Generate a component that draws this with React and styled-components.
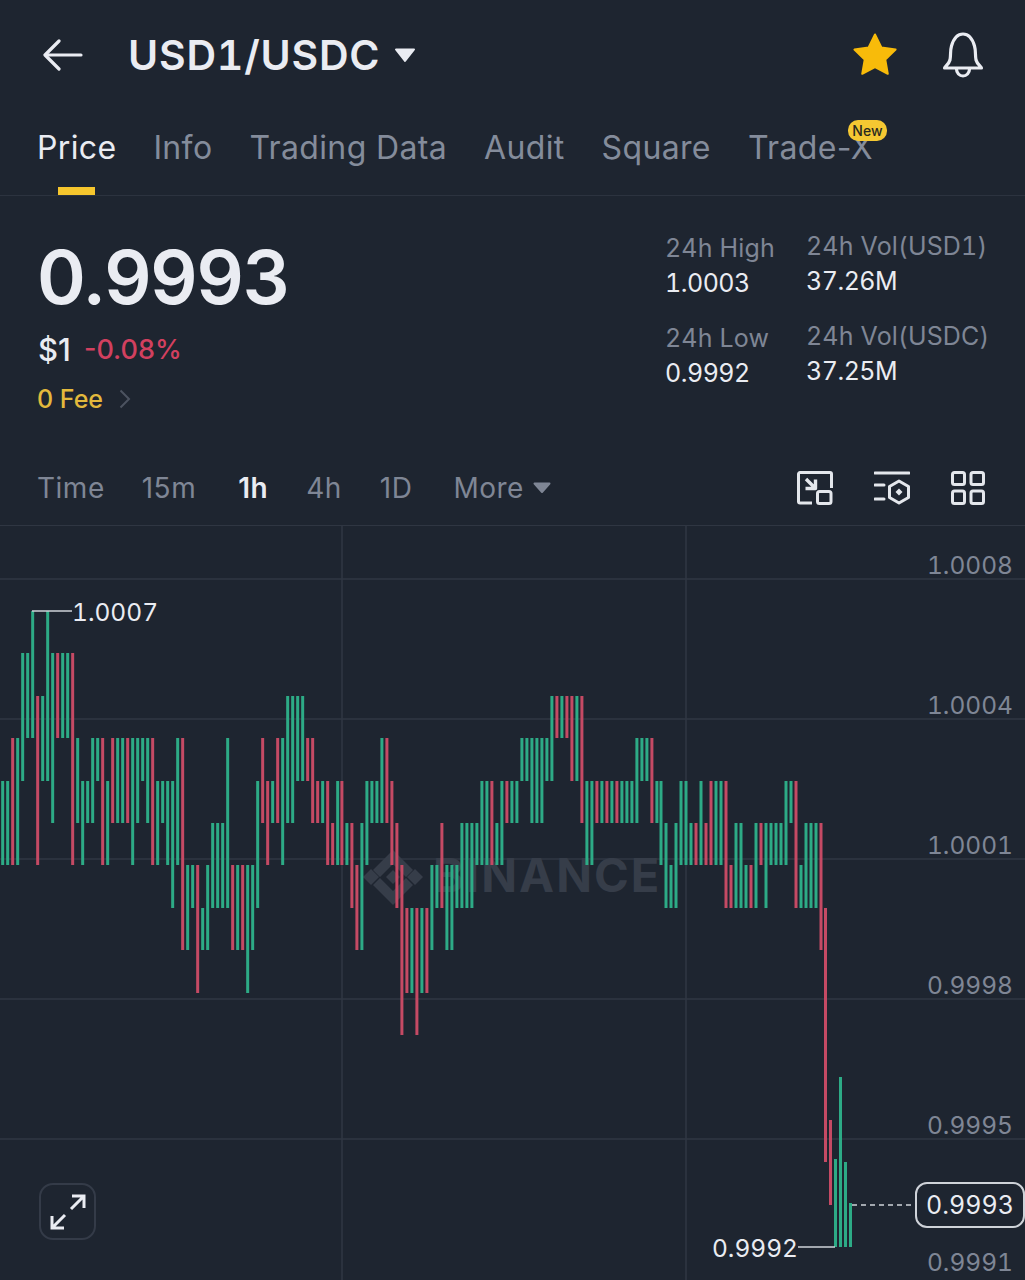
import React from 'react';
import styled, { createGlobalStyle } from 'styled-components';

const GlobalStyle = createGlobalStyle`
  html, body { margin: 0; padding: 0; background: #1e2530; }
  body { font-family: Inter, "Open Sans", sans-serif; overflow: hidden; }
`;

const Page = styled.div`
  width: 1025px;
  height: 1280px;
  background: #1e2530;
  color: #eaecf2;
  display: flex;
  flex-direction: column;
  overflow: hidden;
`;

const Header = styled.header`
  height: 110px;
  display: flex;
  align-items: center;
  padding: 0 41px 0 43px;
  box-sizing: border-box;
`;

const Title = styled.h1`
  margin: 0 0 0 45px;
  font-size: 41px;
  font-weight: 600;
  font-variant-numeric: tabular-nums;
  letter-spacing: 0.8px;
  line-height: 1;
`;

const Caret = styled.svg`
  margin-left: 14px;
`;

const HeaderIcons = styled.div`
  margin-left: auto;
  display: flex;
  align-items: center;
  gap: 44px;
`;

const Tabs = styled.nav`
  height: 86px;
  display: flex;
  gap: 37px;
  padding: 20px 0 0 37px;
  box-sizing: border-box;
  border-bottom: 1px solid #2c333f;
`;

const Tab = styled.div`
  position: relative;
  height: 65px;
  font-size: 32px;
  letter-spacing: 0.35px;
  line-height: 36px;
  color: ${p => (p.$active ? '#eaecf2' : '#848c9b')};
  white-space: nowrap;
  ${p => p.$active && `
    &::after {
      content: '';
      position: absolute;
      left: 21px;
      bottom: 0;
      width: 37px;
      height: 8px;
      background: #f6c62d;
    }
  `}
`;

const NewBadge = styled.span`
  position: absolute;
  right: -14px;
  top: -10px;
  width: 39px;
  height: 21px;
  border-radius: 10px;
  background: #f5c832;
  color: #2a2a20;
  font-size: 14px;
  font-weight: 500;
  letter-spacing: 0;
  line-height: 21px;
  text-align: center;
`;

const Stats = styled.section`
  height: 243px;
  display: flex;
  justify-content: space-between;
  padding: 33px 39px 0 37px;
  box-sizing: border-box;
`;

const PriceColumn = styled.div`
  display: flex;
  flex-direction: column;
`;

const BigPrice = styled.div`
  font-size: 74px;
  font-weight: 600;
  line-height: 96px;
  letter-spacing: -1.2px;
`;

const SubRow = styled.div`
  margin-top: 4px;
  padding-left: 1px;
  display: flex;
  align-items: center;
  gap: 13px;
  height: 40px;
`;

const Usd = styled.span`
  font-size: 31px;
  font-weight: 500;
`;

const Change = styled.span`
  font-size: 27px;
  font-weight: 500;
  color: #d2405f;
`;

const Fee = styled.div`
  margin-top: 15px;
  display: flex;
  align-items: center;
  gap: 16px;
  font-size: 25px;
  font-weight: 500;
  color: #e3b93c;
`;

const MiniStats = styled.div`
  width: 321px;
  display: grid;
  grid-template-columns: 141px 180px;
  grid-auto-rows: 90px;
  padding-top: 2px;
`;

const MiniStat = styled.div`
  font-size: 25px;
  font-variant-numeric: tabular-nums;
  line-height: 35px;
  white-space: nowrap;
  margin-top: ${p => (p.$lift ? '-2px' : '0')};
`;

const MiniLabel = styled.div`
  color: #7f8695;
  letter-spacing: 0.15px;
`;

const MiniValue = styled.div`
  color: #eaecf2;
  letter-spacing: -0.5px;
`;

const Toolbar = styled.div`
  height: 87px;
  display: flex;
  align-items: center;
  padding: 11px 40px 0 37px;
  box-sizing: border-box;
  border-bottom: 1px solid #2f3642;
  font-size: 28px;
  letter-spacing: 0.5px;
  color: #7f8695;
`;

const Interval = styled.span`
  margin-right: ${p => p.$gap}px;
  color: ${p => (p.$active ? '#eaecf2' : 'inherit')};
  font-weight: ${p => (p.$active ? 600 : 400)};
`;

const MoreCaret = styled.svg`
  margin-left: 9px;
`;

const ToolIcons = styled.div`
  margin-left: auto;
  display: flex;
  align-items: center;
  gap: 41px;
`;

const ChartArea = styled.div`
  position: relative;
  flex: 1;
`;

const ChartSvg = styled.svg`
  display: block;
  width: 1025px;
  height: 754px;
`;

const AxisText = styled.text`
  font-family: Inter, sans-serif;
  font-size: 24.5px;
  font-variant-numeric: tabular-nums;
  fill: ${p => p.$fill || '#7f8695'};
  text-anchor: ${p => p.$anchor || 'end'};
`;

const Watermark = styled.text`
  font-family: Inter, sans-serif;
  font-size: 47px;
  font-weight: 700;
  letter-spacing: 2px;
  fill: #363d49;
`;

const PriceTag = styled.div`
  position: absolute;
  right: 0;
  top: 656px;
  width: 110px;
  height: 46px;
  box-sizing: border-box;
  border: 2px solid #cfd3d9;
  border-radius: 12px;
  background: #1e2530;
  font-size: 25px;
  font-variant-numeric: tabular-nums;
  line-height: 42px;
  text-align: center;
`;

const ExpandButton = styled.div`
  position: absolute;
  left: 39px;
  top: 657px;
  width: 57px;
  height: 57px;
  box-sizing: border-box;
  border: 2px solid #343b48;
  border-radius: 14px;
  display: flex;
  align-items: center;
  justify-content: center;
`;

// y of each price step on the chart
const LEVELS = [611, 653, 696, 738, 781, 823, 865, 908, 950, 993, 1035];

const GREEN = '#2dab86';
const RED = '#c54a64';

// colour + top step + bottom step (a = step 10)
const SEG_1 = 'g46 g46 r36 g36 g14 g13 g03 r26 g24 g04 g15 r13 g13 g13 r16 g35 g46 g45 g35 g34 r36 g46 r35 g35 g35 r35 g36 g35 g34 g35 r36 g46 g45 g46 g47 g36 r38 g68 g67 r69 g78 g68 g57 g57 g57 g37 r68 g68 r68 g69 g68 g47 r35 r46 g45 r35 g36 g25 g25 g24 g24 r34 r35 r45 g45 r46 r56 g46';
const SEG_2 = 'r46 g56 r57 r68 g58 g46 g45 g45 g35 r35 r46 r57 r6a r79 g79 r7a g79 r79 g68 g67 r57 g68 g68 g67 g57 g57 g57 g56 g46 g46 r46 g56 g46 r45 g45 g45 g34 g34 g35 g35 g35 g34 g24 r23 g23 r23 r24 g24 r25 g46 g46 r45 g45 r45 g45 r45 g45 g45 g45 g35 g34 g34 r35 g45';
const SEG_3 = 'g46 g57 g67 g57 g46 g46 g56 r56 g46 r56 r46 g46 g46 r47 r67 g57 g57 g67 r67 g57 r56 g57 g56 g56 g56 g46 g45 r47 g67 g57 g57 g57 r58';

const parseSeg = (str, x0) =>
  str.split(' ').map((s, i) => ({
    x: x0 + i * 5,
    color: s[0] === 'g' ? GREEN : RED,
    y1: LEVELS[parseInt(s[1], 36)],
    y2: LEVELS[parseInt(s[2], 36)],
  }));

const BARS = [
  ...parseSeg(SEG_1, 2.67),
  ...parseSeg(SEG_2, 341.9),
  ...parseSeg(SEG_3, 661),
  { x: 825.5, color: RED, y1: 908, y2: 1162 },
  { x: 830.5, color: RED, y1: 1120, y2: 1205 },
  { x: 835.5, color: GREEN, y1: 1159, y2: 1247 },
  { x: 840.5, color: GREEN, y1: 1077, y2: 1247 },
  { x: 845.5, color: GREEN, y1: 1162, y2: 1247 },
  { x: 850.5, color: GREEN, y1: 1203, y2: 1247 },
];

const GRID_Y = [579, 719, 859, 999, 1139];
const GRID_X = [342, 686];
const AXIS = [
  ['1.0008', 574],
  ['1.0004', 714],
  ['1.0001', 854],
  ['0.9998', 994],
  ['0.9995', 1134],
  ['0.9991', 1271],
];

function BackIcon() {
  return (
    <svg width="40" height="32" viewBox="0 0 40 32" fill="none" stroke="#eaecf2" strokeWidth="3.2" strokeLinecap="round" strokeLinejoin="round">
      <path d="M38 16H3" />
      <path d="M16 2L2 16l14 14" />
    </svg>
  );
}

function StarIcon() {
  return (
    <svg width="46" height="44" viewBox="0 0 46 44">
      <path
        d="M23 1.5l6.4 13 14.2 2.1-10.3 10 2.5 14.2L23 34.100l-12.800 6.700 2.500-14.200L2.400 16.600l14.200-2.100z"
        fill="#f8bb0a"
        stroke="#f8bb0a"
        strokeWidth="2"
        strokeLinejoin="round"
      />
    </svg>
  );
}

function BellIcon() {
  return (
    <svg width="42" height="46" viewBox="0 0 42 46" fill="none" stroke="#eaecf2" strokeWidth="3.2" strokeLinecap="round" strokeLinejoin="round">
      <path d="M2.500 36c0-1 4.500-4 5.500-8 1-5 0-9 1.500-14C11.500 7 15.500 2 21 2s9.500 5 11.500 12c1.500 5 .5 9 1.500 14 1 4 5.500 7 5.500 8z" />
      <path d="M14.500 37c0 4 3 7 6.500 7s6.500-3 6.500-7" />
    </svg>
  );
}

function ResizeIcon() {
  return (
    <svg width="36" height="34" viewBox="0 0 36 34" fill="none" stroke="#e4e7ec" strokeWidth="3" strokeLinejoin="round">
      <path d="M15 32H3a1.500 1.500 0 0 1-1.500-1.500V3A1.500 1.500 0 0 1 3 1.500h30A1.500 1.500 0 0 1 34.500 3v14" />
      <rect x="20.500" y="20.500" width="13.500" height="12" rx="2" />
      <path d="M9 8l9 9M8.500 17.500h10v-9" strokeWidth="3.400" />
    </svg>
  );
}

function IndicatorIcon() {
  return (
    <svg width="36" height="34" viewBox="0 0 36 34" fill="none" stroke="#e4e7ec" strokeWidth="3" strokeLinecap="round" strokeLinejoin="round">
      <path d="M1 2h34" />
      <path d="M1 14h9M1 28h9" />
      <path d="M25 10l9.500 5.500v11L25 32l-9.500-5.500v-11z" />
      <path d="M25 17.500l3.500 3.500-3.500 3.500-3.500-3.500z" fill="#e4e7ec" stroke="none" />
    </svg>
  );
}

function GridIcon() {
  return (
    <svg width="34" height="34" viewBox="0 0 34 34" fill="none" stroke="#e4e7ec" strokeWidth="3">
      <rect x="1.500" y="1.500" width="12" height="12" rx="2" />
      <rect x="20" y="1.500" width="12.500" height="12" rx="2" />
      <rect x="1.500" y="20" width="12" height="12.500" rx="2" />
      <rect x="20" y="20" width="12.500" height="12.500" rx="2" />
    </svg>
  );
}

function ExpandIcon() {
  return (
    <svg width="36" height="36" viewBox="0 0 36 36" fill="none" stroke="#eaecf2" strokeWidth="3">
      <path d="M21 15L34 2M22 2h12v12" />
      <path d="M15 21L2 34M14 34H2V22" />
    </svg>
  );
}

function Chart() {
  return (
    <ChartSvg viewBox="0 526 1025 754">
      {GRID_Y.map(y => (
        <line key={y} x1="0" x2="1025" y1={y} y2={y} stroke="#303743" strokeWidth="1.500" />
      ))}
      {GRID_X.map(x => (
        <line key={x} x1={x} x2={x} y1="526" y2="1280" stroke="#303743" strokeWidth="1.500" />
      ))}

      {/* watermark */}
      <g fill="#363d49">
        <path d="M393 870l7 7-7 7-7-7z" />
        <path d="M371 869l8 8-8 8-8-8z" />
        <path d="M415 869l8 8-8 8-8-8z" />
        <path d="M393 850l20 20-7 7-13-13-13 13-7-7z" />
        <path d="M393 905l20-20-7-7-13 13-13-13-7 7z" />
      </g>
      <Watermark x="433" y="892">BINANCE</Watermark>

      {BARS.map((b, i) => (
        <line key={i} x1={b.x} x2={b.x} y1={b.y1} y2={b.y2} stroke={b.color} strokeWidth="3" />
      ))}

      {AXIS.map(([label, y]) => (
        <AxisText key={label} x="1013" y={y}>{label}</AxisText>
      ))}

      <path d="M32 611H72" stroke="#cfd3d9" strokeWidth="1.500" fill="none" />
      <AxisText x="72" y="621" $fill="#eaecf2" $anchor="start">1.0007</AxisText>
      <path d="M798 1247H835" stroke="#cfd3d9" strokeWidth="1.500" fill="none" />
      <AxisText x="798" y="1257" $fill="#eaecf2">0.9992</AxisText>
      <path d="M852 1205H915" stroke="#cfd3d9" strokeWidth="1.500" strokeDasharray="5 4" fill="none" />
    </ChartSvg>
  );
}

function App() {
  return (
    <Page>
      <GlobalStyle />
      <Header>
        <BackIcon />
        <Title>USD1/USDC</Title>
        <Caret width="22" height="15" viewBox="0 0 22 15">
          <path d="M2 1.500h18L11 13z" fill="#eaecf2" stroke="#eaecf2" strokeWidth="2" strokeLinejoin="round" />
        </Caret>
        <HeaderIcons>
          <StarIcon />
          <BellIcon />
        </HeaderIcons>
      </Header>

      <Tabs>
        <Tab $active>Price</Tab>
        <Tab>Info</Tab>
        <Tab>Trading Data</Tab>
        <Tab>Audit</Tab>
        <Tab>Square</Tab>
        <Tab>
          Trade-X
          <NewBadge>New</NewBadge>
        </Tab>
      </Tabs>

      <Stats>
        <PriceColumn>
          <BigPrice>0.9993</BigPrice>
          <SubRow>
            <Usd>$1</Usd>
            <Change>-0.08%</Change>
          </SubRow>
          <Fee>
            0 Fee
            <svg width="12" height="20" viewBox="0 0 12 20" fill="none" stroke="#4c5360" strokeWidth="2">
              <path d="M1.500 1.500L10 10l-8.500 8.500" />
            </svg>
          </Fee>
        </PriceColumn>
        <MiniStats>
          <MiniStat>
            <MiniLabel>24h High</MiniLabel>
            <MiniValue>1.0003</MiniValue>
          </MiniStat>
          <MiniStat $lift>
            <MiniLabel>24h Vol(USD1)</MiniLabel>
            <MiniValue>37.26M</MiniValue>
          </MiniStat>
          <MiniStat>
            <MiniLabel>24h Low</MiniLabel>
            <MiniValue>0.9992</MiniValue>
          </MiniStat>
          <MiniStat $lift>
            <MiniLabel>24h Vol(USDC)</MiniLabel>
            <MiniValue>37.25M</MiniValue>
          </MiniStat>
        </MiniStats>
      </Stats>

      <Toolbar>
        <Interval $gap={37}>Time</Interval>
        <Interval $gap={42}>15m</Interval>
        <Interval $active $gap={38}>1h</Interval>
        <Interval $gap={38}>4h</Interval>
        <Interval $gap={41}>1D</Interval>
        <Interval $gap={0}>More</Interval>
        <MoreCaret width="18" height="12" viewBox="0 0 18 12">
          <path d="M1.500 1.500h15L9 10z" fill="#7f8695" stroke="#7f8695" strokeWidth="2" strokeLinejoin="round" />
        </MoreCaret>
        <ToolIcons>
          <ResizeIcon />
          <IndicatorIcon />
          <GridIcon />
        </ToolIcons>
      </Toolbar>

      <ChartArea>
        <Chart />
        <ExpandButton>
          <ExpandIcon />
        </ExpandButton>
        <PriceTag>0.9993</PriceTag>
      </ChartArea>
    </Page>
  );
}

export default App;
